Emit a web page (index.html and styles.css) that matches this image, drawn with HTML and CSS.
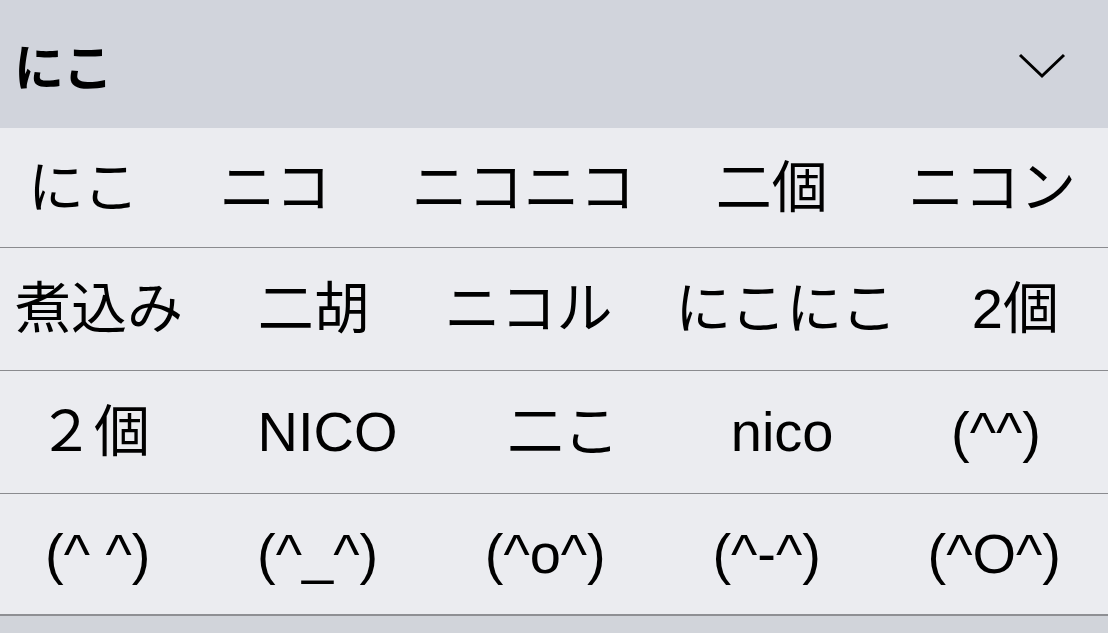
FILE: index.html
```html
<!DOCTYPE html>
<html lang="ja">
<head>
<meta charset="utf-8">
<link rel="stylesheet" href="styles.css">
</head>
<body>
<div class="panel">
  <header class="head">
    <span class="head-title">にこ</span>
    <svg class="chev" width="48" height="26" viewBox="0 0 48 26"><polyline points="2,2 24,23 46,2" fill="none" stroke="#000" stroke-width="3"/></svg>
  </header>
  <div class="grid">
    <div class="row r1">
      <span class="cand">にこ</span><span class="cand">ニコ</span><span class="cand">ニコニコ</span><span class="cand">二個</span><span class="cand">ニコン</span>
    </div>
    <div class="row r2">
      <span class="cand">煮込み</span><span class="cand">二胡</span><span class="cand">ニコル</span><span class="cand">にこにこ</span><span class="cand">2個</span>
    </div>
    <div class="row r3">
      <span class="cand">２個</span><span class="cand">NICO</span><span class="cand">二こ</span><span class="cand">nico</span><span class="cand">(^^)</span>
    </div>
    <div class="row r4">
      <span class="cand">(^ ^)</span><span class="cand">(^_^)</span><span class="cand">(^o^)</span><span class="cand">(^-^)</span><span class="cand">(^O^)</span>
    </div>
  </div>
</div>
</body>
</html>
```
FILE: styles.css
```css
html, body {
  margin: 0;
  padding: 0;
  background: #d1d4da;
}
.panel {
  width: 1108px;
  height: 633px;
  overflow: hidden;
  font-family: "Liberation Sans", "Noto Sans CJK JP", sans-serif;
  color: #000;
}
.head {
  height: 128px;
  background: #d1d4dc;
  display: flex;
  align-items: center;
  justify-content: space-between;
  padding: 0 42px 0 14px;
  box-sizing: border-box;
}
.head-title {
  font-family: "Noto Sans CJK JP", sans-serif;
  font-weight: 700;
  font-size: 50px;
  line-height: 1;
}
.chev {
  display: block;
  margin-top: 4px;
}
.grid {
  background: #ebecf0;
}
.row {
  display: flex;
  align-items: center;
  justify-content: space-between;
  border-bottom: 1px solid #8a8b8f;
  font-size: 56px;
  line-height: 1;
}
.cand {
  white-space: pre;
}
.r1 { height: 119px; padding: 0 32px 0 28px; }
.r2 { height: 122px; padding: 0 49px 0 15px; }
.r2 .cand:nth-child(4) { margin-left: -12px; }
.r3 { height: 122px; padding: 0 67px 0 38px; }
.r3 .cand:nth-child(2) { margin-left: -10px; }
.r3 .cand:nth-child(3) { margin-left: -8px; }
.r3 .cand:nth-child(4) { margin-left: -6px; }
.r4 { height: 120px; padding: 0 47px 0 45px; border-bottom: 2px solid #8e8f93; }
```
